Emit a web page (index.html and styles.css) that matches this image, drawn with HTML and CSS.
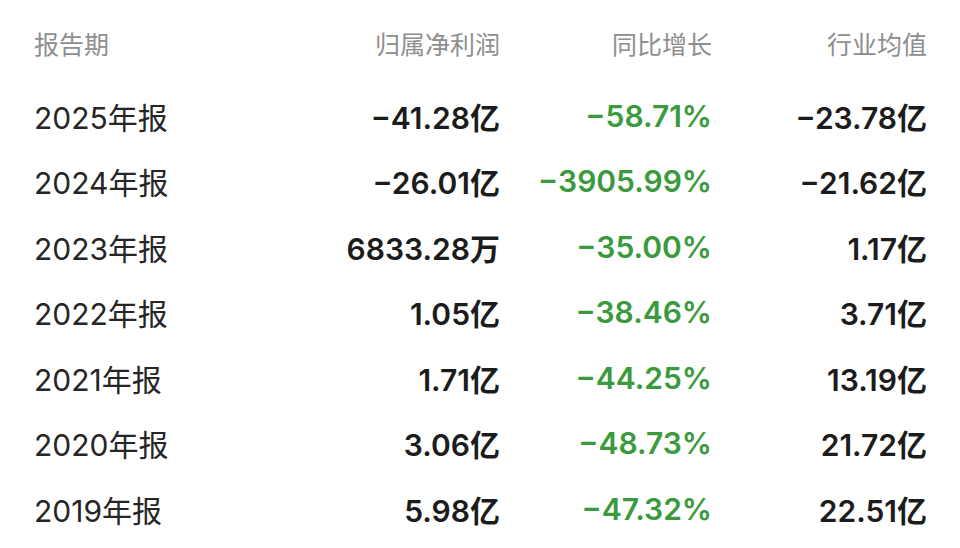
FILE: index.html
```html
<!DOCTYPE html>
<html lang="zh-CN">
<head>
    <meta charset="UTF-8">
    <meta name="viewport" content="width=device-width, initial-scale=1.0">
    <title>归属净利润</title>
    <link rel="stylesheet" href="styles.css">
</head>
<body>
    <div class="profit-table">
        <div class="row head">
            <span class="period">报告期</span>
            <span>归属净利润</span>
            <span>同比增长</span>
            <span>行业均值</span>
        </div>
        <div class="row">
            <span class="period">2025年报</span>
            <span>−41.28亿</span>
            <span class="down">−58.71%</span>
            <span>−23.78亿</span>
        </div>
        <div class="row">
            <span class="period">2024年报</span>
            <span>−26.01亿</span>
            <span class="down">−3905.99%</span>
            <span>−21.62亿</span>
        </div>
        <div class="row">
            <span class="period">2023年报</span>
            <span>6833.28万</span>
            <span class="down">−35.00%</span>
            <span>1.17亿</span>
        </div>
        <div class="row">
            <span class="period">2022年报</span>
            <span>1.05亿</span>
            <span class="down">−38.46%</span>
            <span>3.71亿</span>
        </div>
        <div class="row">
            <span class="period">2021年报</span>
            <span>1.71亿</span>
            <span class="down">−44.25%</span>
            <span>13.19亿</span>
        </div>
        <div class="row">
            <span class="period">2020年报</span>
            <span>3.06亿</span>
            <span class="down">−48.73%</span>
            <span>21.72亿</span>
        </div>
        <div class="row">
            <span class="period">2019年报</span>
            <span>5.98亿</span>
            <span class="down">−47.32%</span>
            <span>22.51亿</span>
        </div>
    </div>
</body>
</html>
```

FILE: styles.css
```css
html {
    height: 100%;
}
body {
    margin: 0;
    height: 100%;
    background: #fff;
    font-family: Inter, "Noto Sans CJK SC", sans-serif;
}
.profit-table {
    padding: 10px 33px 0 34px;
}
.row {
    display: grid;
    grid-template-columns: 256px 210px 212px 215px;
    align-items: center;
    height: 65.5px;
    font-size: 30px;
    font-weight: 600;
    color: #1c1c1c;
}
.row span {
    text-align: right;
    white-space: nowrap;
}
.row .period {
    text-align: left;
    font-weight: 400;
    color: #262626;
}
.row.head {
    height: 66px;
    margin-bottom: 7px;
    font-size: 25px;
    font-weight: 400;
}
.row.head span {
    color: #8e8e8e;
}
.row .down {
    color: #3a9a3d;
}
```
